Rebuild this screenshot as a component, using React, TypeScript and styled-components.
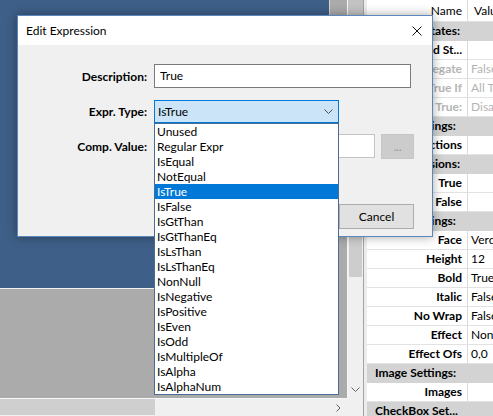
import React from 'react';
import styled, { createGlobalStyle } from 'styled-components';

const GlobalStyle = createGlobalStyle`
  html, body { margin: 0; padding: 0; overflow: hidden; background: #ababab; }
  body { font-family: Lato, "Noto Sans", "Liberation Sans", sans-serif; font-size: 12px; color: #000; }
  * { box-sizing: border-box; }
`;

const Screen = styled.div`
  position: relative;
  width: 493px;
  height: 416px;
  display: flex;
  overflow: hidden;
`;

const Workspace = styled.div`
  display: grid;
  grid-template-columns: 347px 16px;
  grid-template-rows: 1fr 18px;
  width: 363px;
  height: 100%;
  flex: none;
`;

const CanvasArea = styled.div`
  background: #ababab;
  overflow: hidden;
`;

const Canvas = styled.div`
  width: 330px;
  height: 289px;
  background: #3e5f87;
  border-right: 1px solid #d6d6d6;
  border-bottom: 1px solid #f2f2f2;
`;

const VScroll = styled.div`
  display: flex;
  flex-direction: column;
  background: #f0f0f0;
  border-left: 1px solid #f8f8f8;
`;

const ScrollCap = styled.div<{ $dark?: boolean; $w?: number }>`
  flex: none;
  width: ${p => (p.$w ? `${p.$w}px` : 'auto')};
  height: 17px;
  display: flex;
  align-items: center;
  justify-content: center;
  background: ${p => (p.$dark ? '#c3c3c3' : '#f0f0f0')};
`;

const VTrack = styled.div`
  flex: 1;
  padding: 200px 1px 0 1px;
`;

const VThumb = styled.div`
  height: 60px;
  background: #cdcdcd;
`;

const HScroll = styled.div`
  display: flex;
  background: #f0f0f0;
  border-top: 1px solid #f8f8f8;
  padding-bottom: 1px;
`;

const HThumb = styled.div`
  width: 155px;
  background: #cfcfcf;
`;

const HTrack = styled.div`
  flex: 1;
`;

const Corner = styled.div`
  background: #f0f0f0;
`;

const Splitter = styled.div`
  width: 4px;
  flex: none;
  background: #ececec;
  border-left: 1px solid #a3a3a3;
`;

const PropGrid = styled.div`
  flex: 1;
  background: #fff;
  overflow: hidden;
  display: flex;
  flex-direction: column;
`;

const GridRow = styled.div<{ $cat?: boolean; $head?: boolean }>`
  flex: none;
  display: flex;
  height: ${p => (p.$head ? 22 : 19)}px;
  line-height: ${p => (p.$head ? 21 : 18)}px;
  white-space: nowrap;
  background: ${p => (p.$cat ? '#d3d3d3' : '#fff')};
  border-bottom: 1px solid ${p => (p.$cat ? '#d3d3d3' : '#e2e2e2')};
`;

const NameCell = styled.div<{ $dim?: boolean; $head?: boolean }>`
  width: 101px;
  flex: none;
  text-align: right;
  padding-right: 5px;
  font-weight: ${p => (p.$head ? 400 : 700)};
  color: ${p => (p.$dim ? '#b4b4b4' : '#000')};
  border-right: 1px solid #dadada;
  overflow: hidden;
`;

const ValueCell = styled.div<{ $dim?: boolean; $head?: boolean }>`
  flex: 1;
  padding-left: ${p => (p.$head ? 6 : 3)}px;
  color: ${p => (p.$dim ? '#b4b4b4' : '#000')};
  overflow: hidden;
`;

const CatCell = styled.div`
  flex: 1;
  padding-left: 8px;
  font-weight: 700;
  overflow: hidden;
`;

const Dialog = styled.div`
  position: absolute;
  left: 17px;
  top: 15px;
  width: 416px;
  height: 222px;
  border: 1px solid #5b87bb;
  background: #f0f0f0;
  box-shadow: 0 0 10px rgba(0, 0, 0, 0.35);
  display: flex;
  flex-direction: column;
  z-index: 5;
`;

const TitleBar = styled.div`
  height: 29px;
  flex: none;
  background: #fff;
  display: flex;
  align-items: center;
  justify-content: space-between;
  padding: 0 10px 0 8px;
`;

const Title = styled.span`
  font-size: 12px;
  color: #000;
`;

const Body = styled.div`
  flex: 1;
  display: flex;
  flex-direction: column;
  padding: 19px 18px 7px 0;
`;

const FormRow = styled.div<{ $h: number; $mt: number }>`
  display: flex;
  align-items: center;
  height: ${p => p.$h}px;
  margin-top: ${p => p.$mt}px;
`;

const Label = styled.label`
  width: 129px;
  margin-right: 7px;
  text-align: right;
  font-weight: 700;
  flex: none;
`;

const TextBox = styled.div<{ $w: number; $muted?: boolean }>`
  width: ${p => p.$w}px;
  height: 24px;
  background: #fff;
  border: 1px solid ${p => (p.$muted ? '#c4c4c4' : '#7a7a7a')};
  padding-left: 5px;
  line-height: 22px;
`;

const ComboWrap = styled.div`
  position: relative;
  width: 185px;
  height: 23px;
`;

const Combo = styled.div`
  height: 100%;
  display: flex;
  align-items: center;
  justify-content: space-between;
  background: #cce4f7;
  border: 1px solid #0078d7;
  padding: 0 5px 0 3px;
`;

const DropList = styled.ul`
  position: absolute;
  left: 0;
  top: 100%;
  width: 185px;
  margin: 0;
  padding: 0;
  list-style: none;
  background: #fff;
  border: 1px solid #4a6c92;
  z-index: 10;
`;

const DropItem = styled.li<{ $sel?: boolean }>`
  height: 15px;
  line-height: 15px;
  padding-left: 2px;
  background: ${p => (p.$sel ? '#0078d7' : '#fff')};
  color: ${p => (p.$sel ? '#fff' : '#000')};
  white-space: nowrap;
`;

const DotsButton = styled.button`
  width: 33px;
  height: 25px;
  margin-left: 6px;
  border: 1px solid #c6c6c6;
  background: #cccccc;
  color: #8e8e8e;
  font-family: inherit;
  font-size: 11px;
  padding: 0;
`;

const ButtonRow = styled.div`
  margin-top: auto;
  display: flex;
  justify-content: flex-end;
  gap: 6px;
`;

const PushButton = styled.button`
  width: 75px;
  height: 25px;
  border: 1px solid #adadad;
  background: #e1e1e1;
  font-family: inherit;
  font-size: 12px;
  color: #000;
  padding: 0;
`;

const ChevronDown = ({ color = '#606060' }: { color?: string }) => (
  <svg width="9" height="5" viewBox="0 0 9 5">
    <polyline points="0.5,0.5 4.5,4.5 8.5,0.5" fill="none" stroke={color} strokeWidth="1" />
  </svg>
);

const ChevronRight = () => (
  <svg width="5" height="8" viewBox="0 0 5 8">
    <polyline points="0.5,0.5 4,4 0.5,7.5" fill="none" stroke="#606060" strokeWidth="1" />
  </svg>
);

const CloseIcon = () => (
  <svg width="10" height="10" viewBox="0 0 10 10">
    <path d="M0.5 0.5 L9.5 9.5 M9.5 0.5 L0.5 9.5" stroke="#111" strokeWidth="1" fill="none" />
  </svg>
);

type Row =
  | { cat: string }
  | { name: string; value?: string; dim?: boolean };

const rows: Row[] = [
  { cat: 'Checked States:' },
  { name: 'Checked St...' },
  { name: 'Negate', value: 'False', dim: true },
  { name: 'True If', value: 'All True', dim: true },
  { name: 'If True:', value: 'Disabled', dim: true },
  { cat: 'Touch Settings:' },
  { name: 'Actions' },
  { cat: 'Alt Expressions:' },
  { name: 'True' },
  { name: 'False' },
  { cat: 'Touch Settings:' },
  { name: 'Face', value: 'Verdana' },
  { name: 'Height', value: '12' },
  { name: 'Bold', value: 'True' },
  { name: 'Italic', value: 'False' },
  { name: 'No Wrap', value: 'False' },
  { name: 'Effect', value: 'None' },
  { name: 'Effect Ofs', value: '0,0' },
  { cat: 'Image Settings:' },
  { name: 'Images' },
  { cat: 'CheckBox Set...' },
];

const exprTypes = [
  'Unused', 'Regular Expr', 'IsEqual', 'NotEqual', 'IsTrue', 'IsFalse', 'IsGtThan',
  'IsGtThanEq', 'IsLsThan', 'IsLsThanEq', 'NonNull', 'IsNegative', 'IsPositive',
  'IsEven', 'IsOdd', 'IsMultipleOf', 'IsAlpha', 'IsAlphaNum',
];

export default function App() {
  return (
    <>
      <GlobalStyle />
      <Screen>
        <Workspace>
          <CanvasArea>
            <Canvas />
          </CanvasArea>
          <VScroll>
            <ScrollCap $dark />
            <VTrack>
              <VThumb />
            </VTrack>
            <ScrollCap>
              <ChevronDown />
            </ScrollCap>
          </VScroll>
          <HScroll>
            <HThumb />
            <HTrack />
            <ScrollCap $w={17}>
              <ChevronRight />
            </ScrollCap>
          </HScroll>
          <Corner />
        </Workspace>
        <Splitter />
        <PropGrid>
          <GridRow $head>
            <NameCell $head>Name</NameCell>
            <ValueCell $head>Value</ValueCell>
          </GridRow>
          {rows.map((r, i) =>
            'cat' in r ? (
              <GridRow key={i} $cat>
                <CatCell>{r.cat}</CatCell>
              </GridRow>
            ) : (
              <GridRow key={i}>
                <NameCell $dim={r.dim}>{r.name}</NameCell>
                <ValueCell $dim={r.dim}>{r.value ?? ''}</ValueCell>
              </GridRow>
            )
          )}
        </PropGrid>

        <Dialog>
          <TitleBar>
            <Title>Edit Expression</Title>
            <CloseIcon />
          </TitleBar>
          <Body>
            <FormRow $h={24} $mt={0}>
              <Label>Description:</Label>
              <TextBox $w={257}>True</TextBox>
            </FormRow>
            <FormRow $h={23} $mt={12}>
              <Label>Expr. Type:</Label>
              <ComboWrap>
                <Combo>
                  <span>IsTrue</span>
                  <ChevronDown color="#505050" />
                </Combo>
                <DropList>
                  {exprTypes.map(t => (
                    <DropItem key={t} $sel={t === 'IsTrue'}>{t}</DropItem>
                  ))}
                </DropList>
              </ComboWrap>
            </FormRow>
            <FormRow $h={24} $mt={11}>
              <Label>Comp. Value:</Label>
              <TextBox $w={223} $muted />
              <DotsButton>...</DotsButton>
            </FormRow>
            <ButtonRow>
              <PushButton>Cancel</PushButton>
            </ButtonRow>
          </Body>
        </Dialog>
      </Screen>
    </>
  );
}
